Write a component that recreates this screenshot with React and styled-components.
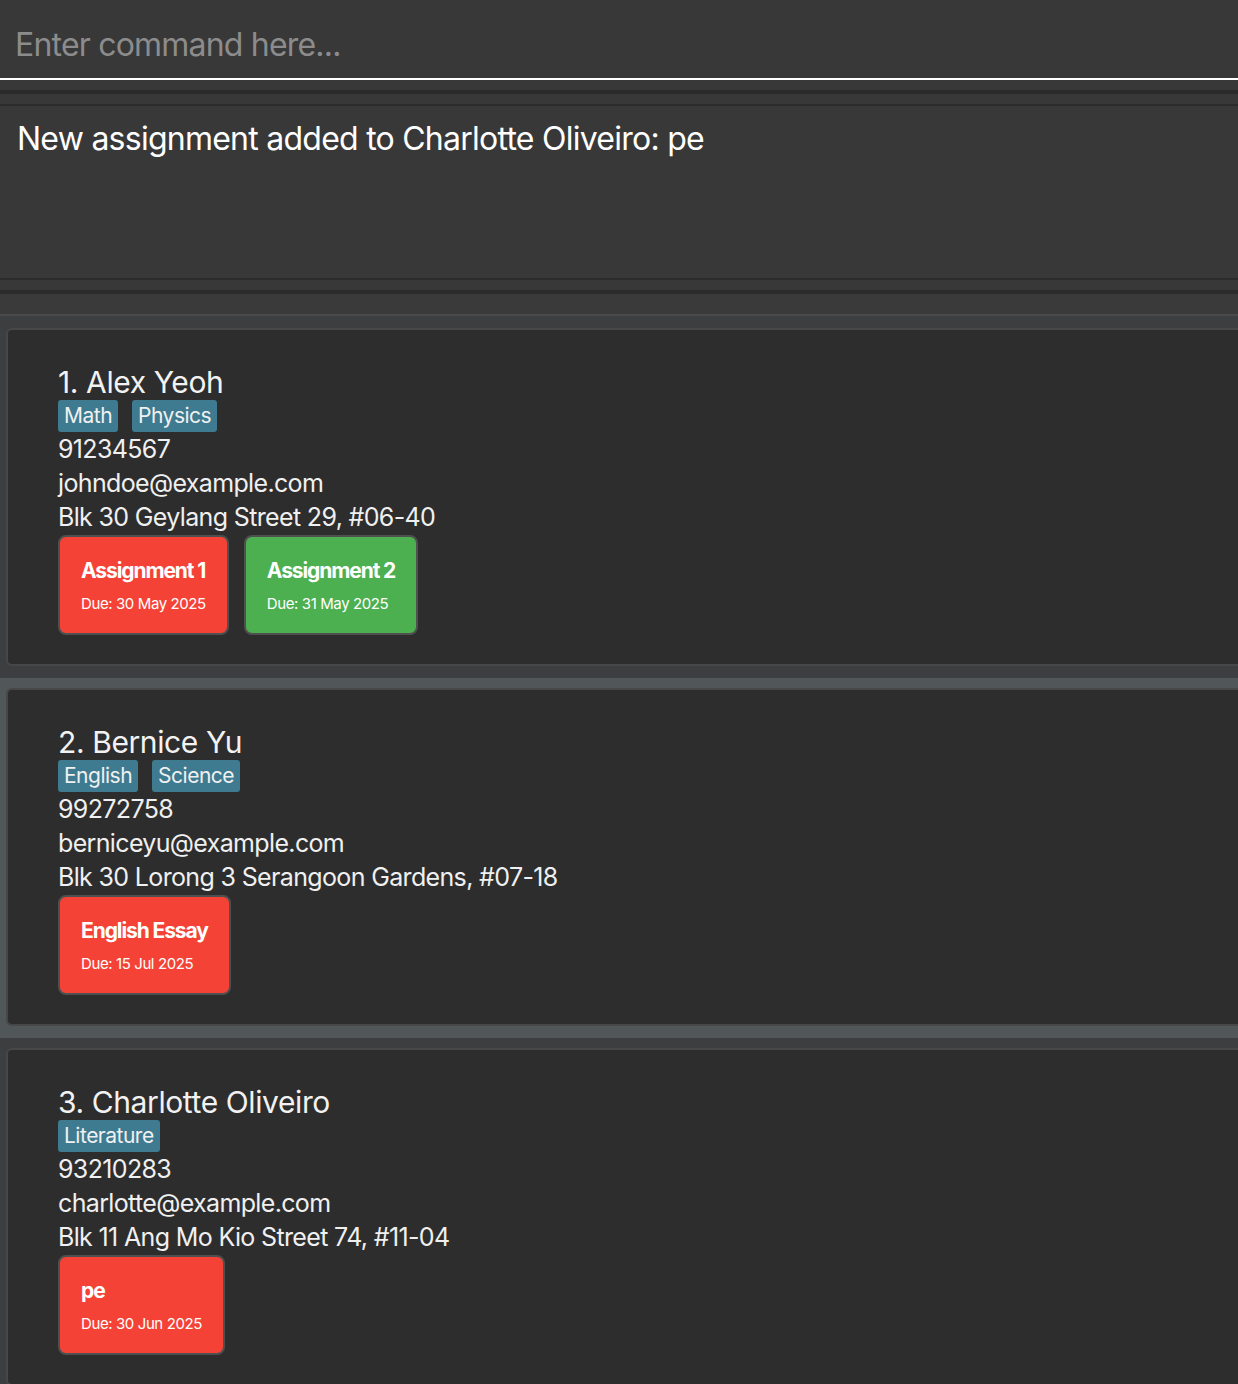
import React from 'react';
import styled, { createGlobalStyle } from 'styled-components';

const GlobalStyle = createGlobalStyle`
  html, body {
    margin: 0;
    padding: 0;
    background-color: #383838;
    overflow: hidden;
  }
  * {
    box-sizing: border-box;
  }
  body {
    font-family: 'Inter', 'Noto Sans', sans-serif;
  }
`;

const Window = styled.div`
  display: flex;
  flex-direction: column;
  width: 100%;
  background-color: #383838;

  & > * {
    flex-shrink: 0;
  }
`;

const CommandBox = styled.div`
  height: 80px;
  background-color: #383838;
  border-bottom: 2px solid #ffffff;
  display: flex;
  align-items: center;
  padding: 10px 15px 0;
`;

const CommandInput = styled.input`
  width: 100%;
  border: none;
  outline: none;
  background: transparent;
  font-family: 'Inter', sans-serif;
  font-size: 32px;
  letter-spacing: -0.8px;
  color: #ffffff;
  padding: 0;

  &::placeholder {
    color: #8c8c8c;
  }
`;

const Strip = styled.div`
  height: ${props => props.h}px;
  background-color: ${props => props.bg || '#383838'};
`;

const ResultBox = styled.div`
  height: 172px;
  background-color: #383838;
  padding: 13px 17px;
  color: #ffffff;
  font-size: 32px;
  letter-spacing: -0.75px;
  line-height: 40px;
`;

const List = styled.div`
  display: flex;
  flex-direction: column;
  border-top: 2px solid #4a4a4a;
  padding-top: 2px;
  background-color: #3c3e3f;
`;

const Cell = styled.div`
  background-color: ${props => (props.odd ? '#515658' : '#3c3e3f')};
  padding: 10px 0 12px 6px;
`;

const Card = styled.div`
  background-color: #2d2d2d;
  border: 2px solid #474747;
  border-right: none;
  border-radius: 6px 0 0 6px;
  height: 338px;
  padding: 34px 0 0 50px;
  display: flex;
  flex-direction: column;
  align-items: flex-start;
  color: #f0f0f0;
`;

const Name = styled.div`
  font-size: 30px;
  line-height: 36px;
  letter-spacing: -0.4px;
  color: #f2f2f2;
`;

const Tags = styled.div`
  display: flex;
  gap: 14px;
`;

const Tag = styled.span`
  background-color: #3e7b91;
  color: #f0f0f0;
  font-size: 21px;
  line-height: 32px;
  padding: 0 6px;
  border-radius: 3px;
  letter-spacing: -0.5px;
`;

const Detail = styled.div`
  font-size: 25px;
  line-height: 34px;
  letter-spacing: -0.65px;
  color: #f0f0f0;
`;

const Assignments = styled.div`
  display: flex;
  gap: 15px;
  margin-top: 1px;
`;

const Assignment = styled.div`
  background-color: ${props => (props.done ? '#4caf50' : '#f44336')};
  border: 2px solid #4f4f4f;
  border-radius: 8px;
  padding: 21px 21px 19px 21px;
  height: 100px;
  display: flex;
  flex-direction: column;
  gap: 10px;
  color: #ffffff;
`;

const AssignmentTitle = styled.div`
  font-size: 21px;
  line-height: 26px;
  font-weight: 700;
  letter-spacing: -1.1px;
`;

const Due = styled.div`
  font-size: 15px;
  line-height: 20px;
  letter-spacing: -0.4px;
`;

const persons = [
  {
    name: 'Alex Yeoh',
    tags: ['Math', 'Physics'],
    phone: '91234567',
    email: 'johndoe@example.com',
    address: 'Blk 30 Geylang Street 29, #06-40',
    assignments: [
      { title: 'Assignment 1', due: '30 May 2025', done: false },
      { title: 'Assignment 2', due: '31 May 2025', done: true },
    ],
  },
  {
    name: 'Bernice Yu',
    tags: ['English', 'Science'],
    phone: '99272758',
    email: 'berniceyu@example.com',
    address: 'Blk 30 Lorong 3 Serangoon Gardens, #07-18',
    assignments: [{ title: 'English Essay', due: '15 Jul 2025', done: false }],
  },
  {
    name: 'Charlotte Oliveiro',
    tags: ['Literature'],
    phone: '93210283',
    email: 'charlotte@example.com',
    address: 'Blk 11 Ang Mo Kio Street 74, #11-04',
    assignments: [{ title: 'pe', due: '30 Jun 2025', done: false }],
  },
];

export default function App() {
  return (
    <Window>
      <GlobalStyle />
      <CommandBox>
        <CommandInput placeholder="Enter command here..." />
      </CommandBox>
      <Strip h={10} />
      <Strip h={4} bg="#2b2b2b" />
      <Strip h={10} />
      <Strip h={2} bg="#2b2b2b" />
      <ResultBox>New assignment added to Charlotte Oliveiro: pe</ResultBox>
      <Strip h={2} bg="#2b2b2b" />
      <Strip h={10} />
      <Strip h={4} bg="#2b2b2b" />
      <Strip h={20} bg="#3a3a3a" />
      <List>
        {persons.map((p, i) => (
          <Cell key={p.name} odd={i % 2 === 1}>
            <Card>
              <Name>
                {i + 1}. {p.name}
              </Name>
              <Tags>
                {p.tags.map(t => (
                  <Tag key={t}>{t}</Tag>
                ))}
              </Tags>
              <Detail>{p.phone}</Detail>
              <Detail>{p.email}</Detail>
              <Detail>{p.address}</Detail>
              <Assignments>
                {p.assignments.map(a => (
                  <Assignment key={a.title} done={a.done}>
                    <AssignmentTitle>{a.title}</AssignmentTitle>
                    <Due>Due: {a.due}</Due>
                  </Assignment>
                ))}
              </Assignments>
            </Card>
          </Cell>
        ))}
      </List>
    </Window>
  );
}
